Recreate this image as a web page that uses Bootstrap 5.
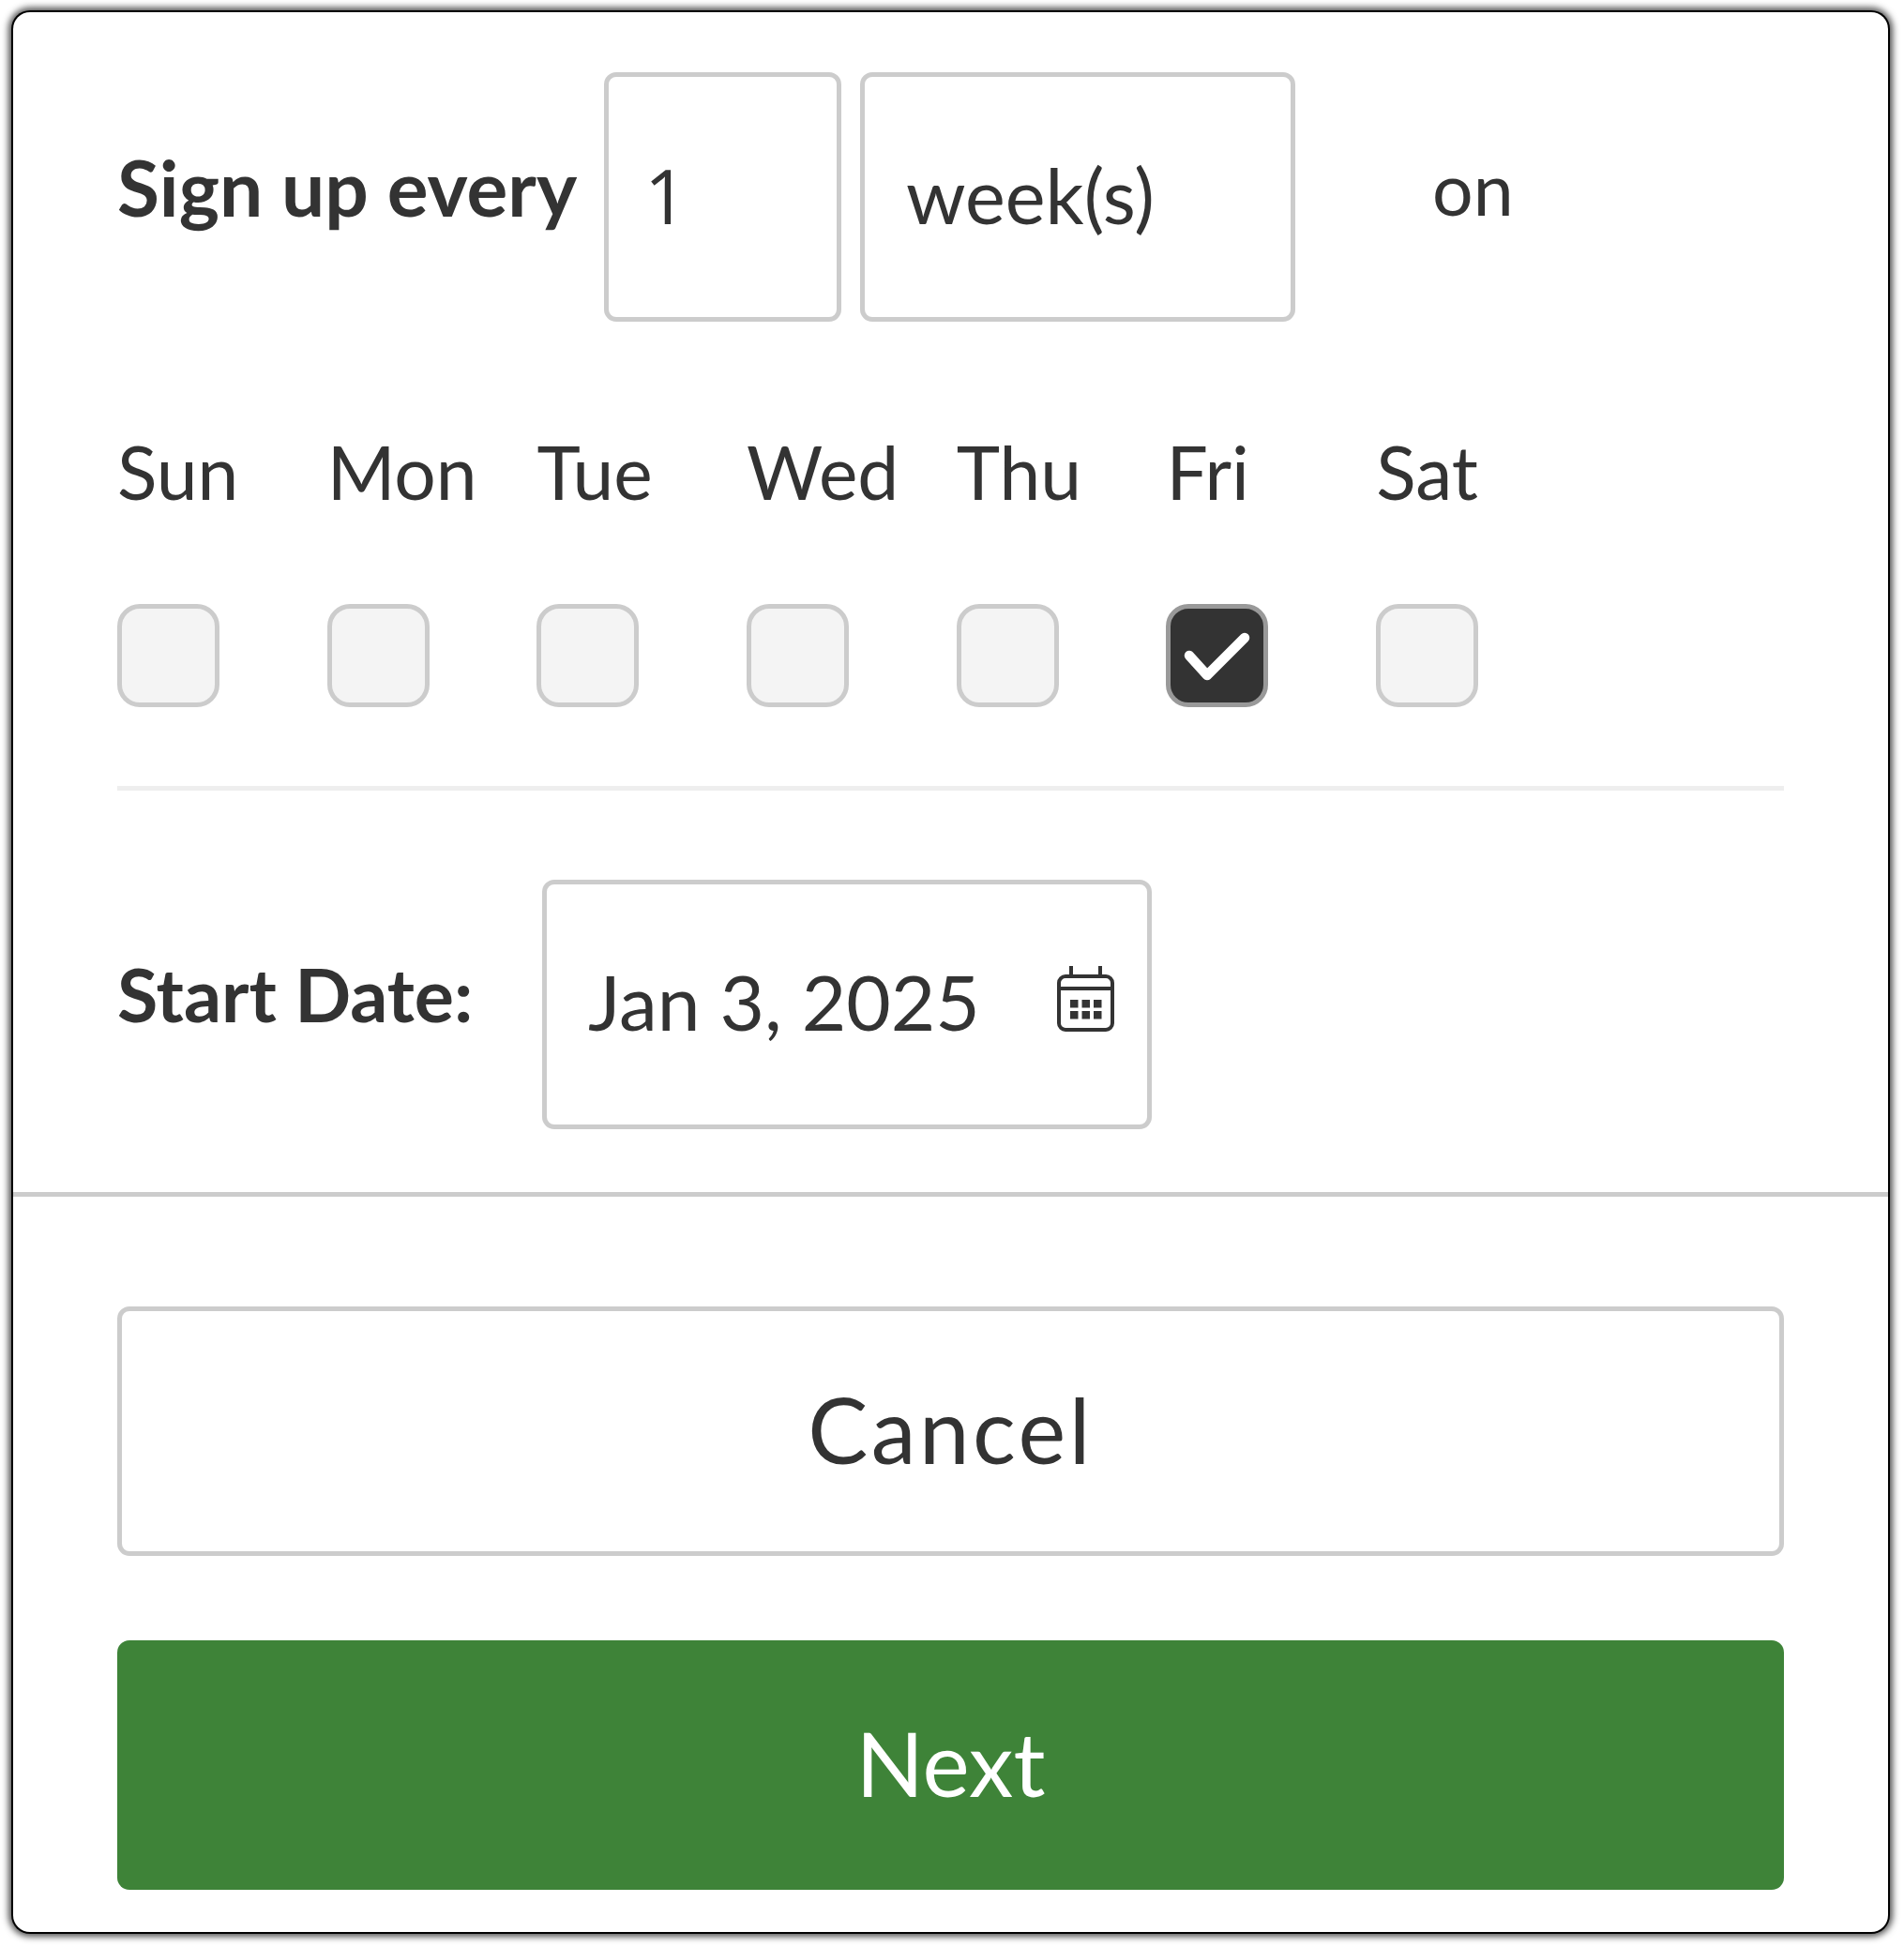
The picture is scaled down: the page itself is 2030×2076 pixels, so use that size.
<!DOCTYPE html>
<html lang="en">
<head>
<meta charset="utf-8">
<title>Sign up schedule</title>
<link href="https://cdn.jsdelivr.net/npm/bootstrap@5.3.0/dist/css/bootstrap.min.css" rel="stylesheet">
<style>
html,body{background:#fff;height:100%;}
body{padding:13px 17px 16px 14px;font-family:"Lato","Liberation Sans",sans-serif;color:#333;}
.panel-box{height:2047px;border-radius:18px;background:#fff;box-shadow:0 0 0 2px #000,0 0 7px 5px rgba(0,0,0,.68);overflow:hidden;}
.sec-top{padding:64px 111px 0 111px;height:1258px;}
.row-every{height:266px;}
.lbl-strong{font-weight:700;line-height:1;color:#333;margin:0;}
.lbl-every{width:519px;padding-bottom:23px;font-size:82px;}
.field-box.form-control{height:266px;border:5px solid #ccc;border-radius:13px;color:#333;box-shadow:none;background:#fff;}
.fld-num.form-control{width:253px;padding:0 0 6px 38px;font-size:80px;font-family:"Open Sans",sans-serif;}
.fld-unit.form-control{width:464px;padding:0 0 6px 44px;margin-left:20px;font-size:81px;}
.txt-on{font-size:77px;line-height:1;margin-left:146px;padding-bottom:19px;}
.grid-days{display:grid;grid-template-columns:repeat(7,223.7px);}
.day-name{font-size:78.5px;line-height:1;margin-top:121px;height:90px;}
.day-box{margin-top:90px;}
.day-check.form-check-input{display:block;width:109px;height:110px;margin:0;border:5px solid #ccc;border-radius:24px;background-color:#f4f4f4;box-shadow:none;}
.day-check.form-check-input:checked{background-color:#333;border-color:#999;background-size:100% 100%;background-image:url("data:image/svg+xml,%3Csvg xmlns='http://www.w3.org/2000/svg' viewBox='0 0 99 100'%3E%3Cpath d='M20 50 39 71 79 31' fill='none' stroke='%23fff' stroke-width='10.5' stroke-linecap='round' stroke-linejoin='round'/%3E%3C/svg%3E");}
.line-soft{height:5px;background:#eee;margin-top:84px;}
.row-date{margin-top:95px;}
.lbl-date{width:453px;padding-bottom:24px;font-size:79px;}
.date-wrap{width:650px;}
.fld-date.form-control{width:650px;padding:0 0 8px 44px;font-size:82px;}
.cal-ic{top:92px;left:549px;width:61px;height:70px;}
.line-hard{height:5px;background:#ccc;}
.sec-bottom{padding:117px 111px 0 111px;}
.btn.act-cancel,.btn.act-next{display:block;width:100%;height:266px;line-height:1;border-radius:13px;padding:0 0 5px;}
.btn.act-cancel{border:5px solid #ccc;background:#fff;color:#333;font-size:96px;letter-spacing:3.5px;}
.btn.act-next{border:0;background:#3e8338;color:#fff;margin-top:90px;font-size:95px;}
</style>
</head>
<body>
<div class="panel-box">
  <div class="sec-top">
    <div class="row-every d-flex align-items-center">
      <label class="lbl-strong lbl-every" for="every">Sign up every</label>
      <input id="every" class="form-control field-box fld-num" type="text" value="1">
      <input class="form-control field-box fld-unit" type="text" value="week(s)" aria-label="Period">
      <span class="txt-on">on</span>
    </div>
    <div class="grid-days">
      <div class="day-name">Sun</div><div class="day-name">Mon</div><div class="day-name">Tue</div><div class="day-name">Wed</div><div class="day-name">Thu</div><div class="day-name">Fri</div><div class="day-name">Sat</div>
      <div class="day-box"><input class="form-check-input day-check" type="checkbox" aria-label="Sun"></div>
      <div class="day-box"><input class="form-check-input day-check" type="checkbox" aria-label="Mon"></div>
      <div class="day-box"><input class="form-check-input day-check" type="checkbox" aria-label="Tue"></div>
      <div class="day-box"><input class="form-check-input day-check" type="checkbox" aria-label="Wed"></div>
      <div class="day-box"><input class="form-check-input day-check" type="checkbox" aria-label="Thu"></div>
      <div class="day-box"><input class="form-check-input day-check" type="checkbox" aria-label="Fri" checked></div>
      <div class="day-box"><input class="form-check-input day-check" type="checkbox" aria-label="Sat"></div>
    </div>
    <div class="line-soft"></div>
    <div class="row-date d-flex align-items-center">
      <label class="lbl-strong lbl-date" for="start">Start Date:</label>
      <div class="date-wrap position-relative">
        <input id="start" class="form-control field-box fld-date" type="text" value="Jan 3, 2025">
        <svg class="cal-ic position-absolute" viewBox="0 0 61 70" fill="none" stroke="#333" stroke-width="4">
          <rect x="2" y="11" width="57" height="57" rx="7"/>
          <path d="M2 24H59M15 0V11M46 0V11"/>
          <g fill="#333" stroke="none">
            <rect x="14" y="36" width="8.5" height="8.5"/><rect x="26.5" y="36" width="8.5" height="8.5"/><rect x="39" y="36" width="8.5" height="8.5"/>
            <rect x="14" y="48" width="8.5" height="8.5"/><rect x="26.5" y="48" width="8.5" height="8.5"/><rect x="39" y="48" width="8.5" height="8.5"/>
          </g>
        </svg>
      </div>
    </div>
  </div>
  <div class="line-hard"></div>
  <div class="sec-bottom">
    <button class="btn act-cancel" type="button">Cancel</button>
    <button class="btn act-next" type="button">Next</button>
  </div>
</div>
<script src="https://cdn.jsdelivr.net/npm/bootstrap@5.3.0/dist/js/bootstrap.bundle.min.js"></script>
</body>
</html>
